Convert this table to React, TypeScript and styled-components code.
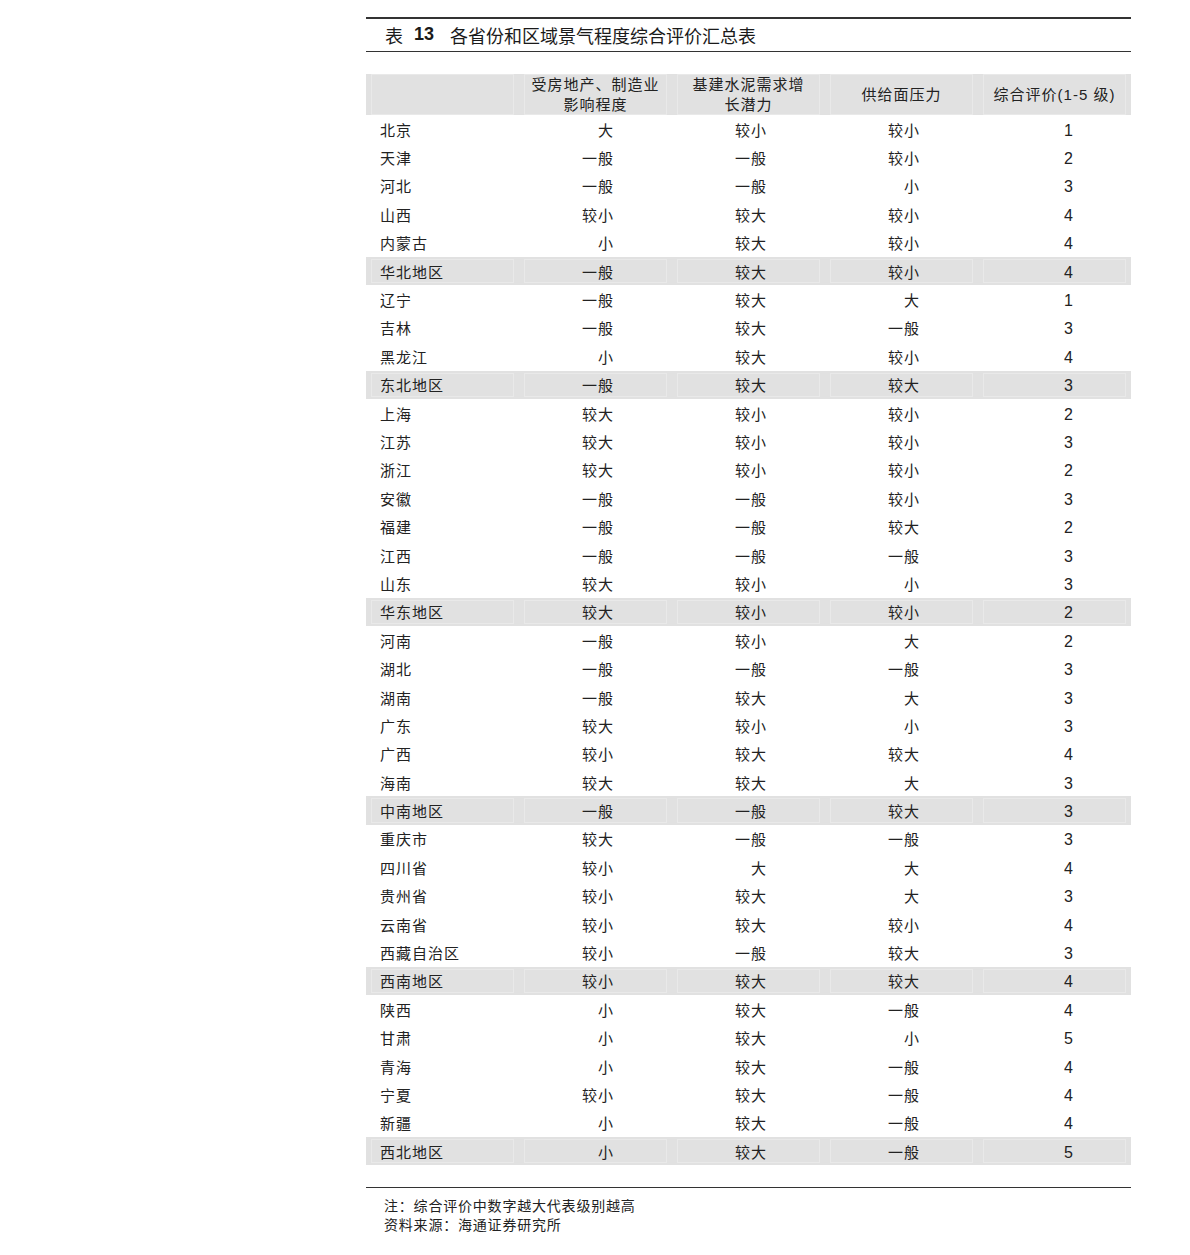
import styled, { createGlobalStyle } from "styled-components";

const GlobalStyle = createGlobalStyle`
  html, body {
    margin: 0;
    padding: 0;
    background: #ffffff;
  }
  body {
    font-family: "Liberation Sans", "Noto Sans CJK SC", sans-serif;
    color: #222;
  }
`;

type Row = [string, string, string, string, string];

const rows: Row[] = [
  ["北京", "大", "较小", "较小", "1"],
  ["天津", "一般", "一般", "较小", "2"],
  ["河北", "一般", "一般", "小", "3"],
  ["山西", "较小", "较大", "较小", "4"],
  ["内蒙古", "小", "较大", "较小", "4"],
  ["华北地区", "一般", "较大", "较小", "4"],
  ["辽宁", "一般", "较大", "大", "1"],
  ["吉林", "一般", "较大", "一般", "3"],
  ["黑龙江", "小", "较大", "较小", "4"],
  ["东北地区", "一般", "较大", "较大", "3"],
  ["上海", "较大", "较小", "较小", "2"],
  ["江苏", "较大", "较小", "较小", "3"],
  ["浙江", "较大", "较小", "较小", "2"],
  ["安徽", "一般", "一般", "较小", "3"],
  ["福建", "一般", "一般", "较大", "2"],
  ["江西", "一般", "一般", "一般", "3"],
  ["山东", "较大", "较小", "小", "3"],
  ["华东地区", "较大", "较小", "较小", "2"],
  ["河南", "一般", "较小", "大", "2"],
  ["湖北", "一般", "一般", "一般", "3"],
  ["湖南", "一般", "较大", "大", "3"],
  ["广东", "较大", "较小", "小", "3"],
  ["广西", "较小", "较大", "较大", "4"],
  ["海南", "较大", "较大", "大", "3"],
  ["中南地区", "一般", "一般", "较大", "3"],
  ["重庆市", "较大", "一般", "一般", "3"],
  ["四川省", "较小", "大", "大", "4"],
  ["贵州省", "较小", "较大", "大", "3"],
  ["云南省", "较小", "较大", "较小", "4"],
  ["西藏自治区", "较小", "一般", "较大", "3"],
  ["西南地区", "较小", "较大", "较大", "4"],
  ["陕西", "小", "较大", "一般", "4"],
  ["甘肃", "小", "较大", "小", "5"],
  ["青海", "小", "较大", "一般", "4"],
  ["宁夏", "较小", "较大", "一般", "4"],
  ["新疆", "小", "较大", "一般", "4"],
  ["西北地区", "小", "较大", "一般", "5"],
];

const Page = styled.div`
  width: 1190px;
  box-sizing: border-box;
  padding: 17px 59px 20px 366px;
`;

const TitleBar = styled.div`
  border-top: 2px solid #333;
  border-bottom: 1px solid #333;
  height: 31px;
  padding-bottom: 1px;
  display: flex;
  align-items: center;
  padding-left: 19px;
  font-size: 18px;
  color: #1a1a1a;
`;

const TitleNo = styled.b`
  font-family: "Liberation Sans", sans-serif;
  font-weight: 700;
  margin: 0 16px 0 11px;
`;

const Table = styled.div`
  margin-top: 22px;
`;

const Line = styled.div<{ $shaded?: boolean; $head?: boolean }>`
  display: grid;
  grid-template-columns: repeat(5, 1fr);
  height: ${(p) => (p.$head ? "41px" : "28.4px")};
  background: ${(p) => (p.$shaded ? "#e1e1e1" : "transparent")};
  font-size: 15px;
`;

const Cell = styled.div<{ $shaded?: boolean; $align: "left" | "right" }>`
  display: flex;
  align-items: center;
  justify-content: ${(p) => (p.$align === "left" ? "flex-start" : "flex-end")};
  padding: ${(p) => (p.$align === "left" ? "0 0 0 8px" : "0 52px 0 0")};
  margin: 2px 5px;
  border: 1px solid ${(p) => (p.$shaded ? "#e9e9e9" : "transparent")};
  white-space: nowrap;
  letter-spacing: 1px;
`;

const Score = styled.span`
  font-size: 16px;
  letter-spacing: 0;
  padding-top: 3px;
`;

const HeadCell = styled.div`
  display: flex;
  align-items: center;
  justify-content: center;
  text-align: center;
  line-height: 19.5px;
  margin: 0 5px;
  border: 1px solid #e9e9e9;
  letter-spacing: 1px;
  white-space: nowrap;
  overflow: hidden;
`;

const BottomRule = styled.div`
  margin-top: 22px;
  border-top: 1px solid #333;
`;

const Notes = styled.div`
  padding: 9px 0 0 18px;
  font-size: 14px;
  line-height: 19px;
  letter-spacing: 0.8px;
  color: #222;
`;

export default function App() {
  return (
    <>
      <GlobalStyle />
      <Page>
        <TitleBar>
          表<TitleNo>13</TitleNo>各省份和区域景气程度综合评价汇总表
        </TitleBar>

        <Table>
          <Line $head $shaded>
            <HeadCell />
            <HeadCell>
              受房地产、制造业
              <br />
              影响程度
            </HeadCell>
            <HeadCell>
              基建水泥需求增
              <br />
              长潜力
            </HeadCell>
            <HeadCell>供给面压力</HeadCell>
            <HeadCell>综合评价(1-5 级)</HeadCell>
          </Line>

          {rows.map((r) => {
            const shaded = r[0].endsWith("地区");
            return (
              <Line key={r[0]} $shaded={shaded}>
                <Cell $shaded={shaded} $align="left">
                  {r[0]}
                </Cell>
                <Cell $shaded={shaded} $align="right">
                  {r[1]}
                </Cell>
                <Cell $shaded={shaded} $align="right">
                  {r[2]}
                </Cell>
                <Cell $shaded={shaded} $align="right">
                  {r[3]}
                </Cell>
                <Cell $shaded={shaded} $align="right">
                  <Score>{r[4]}</Score>
                </Cell>
              </Line>
            );
          })}
        </Table>

        <BottomRule />
        <Notes>
          注：综合评价中数字越大代表级别越高
          <br />
          资料来源：海通证券研究所
        </Notes>
      </Page>
    </>
  );
}
